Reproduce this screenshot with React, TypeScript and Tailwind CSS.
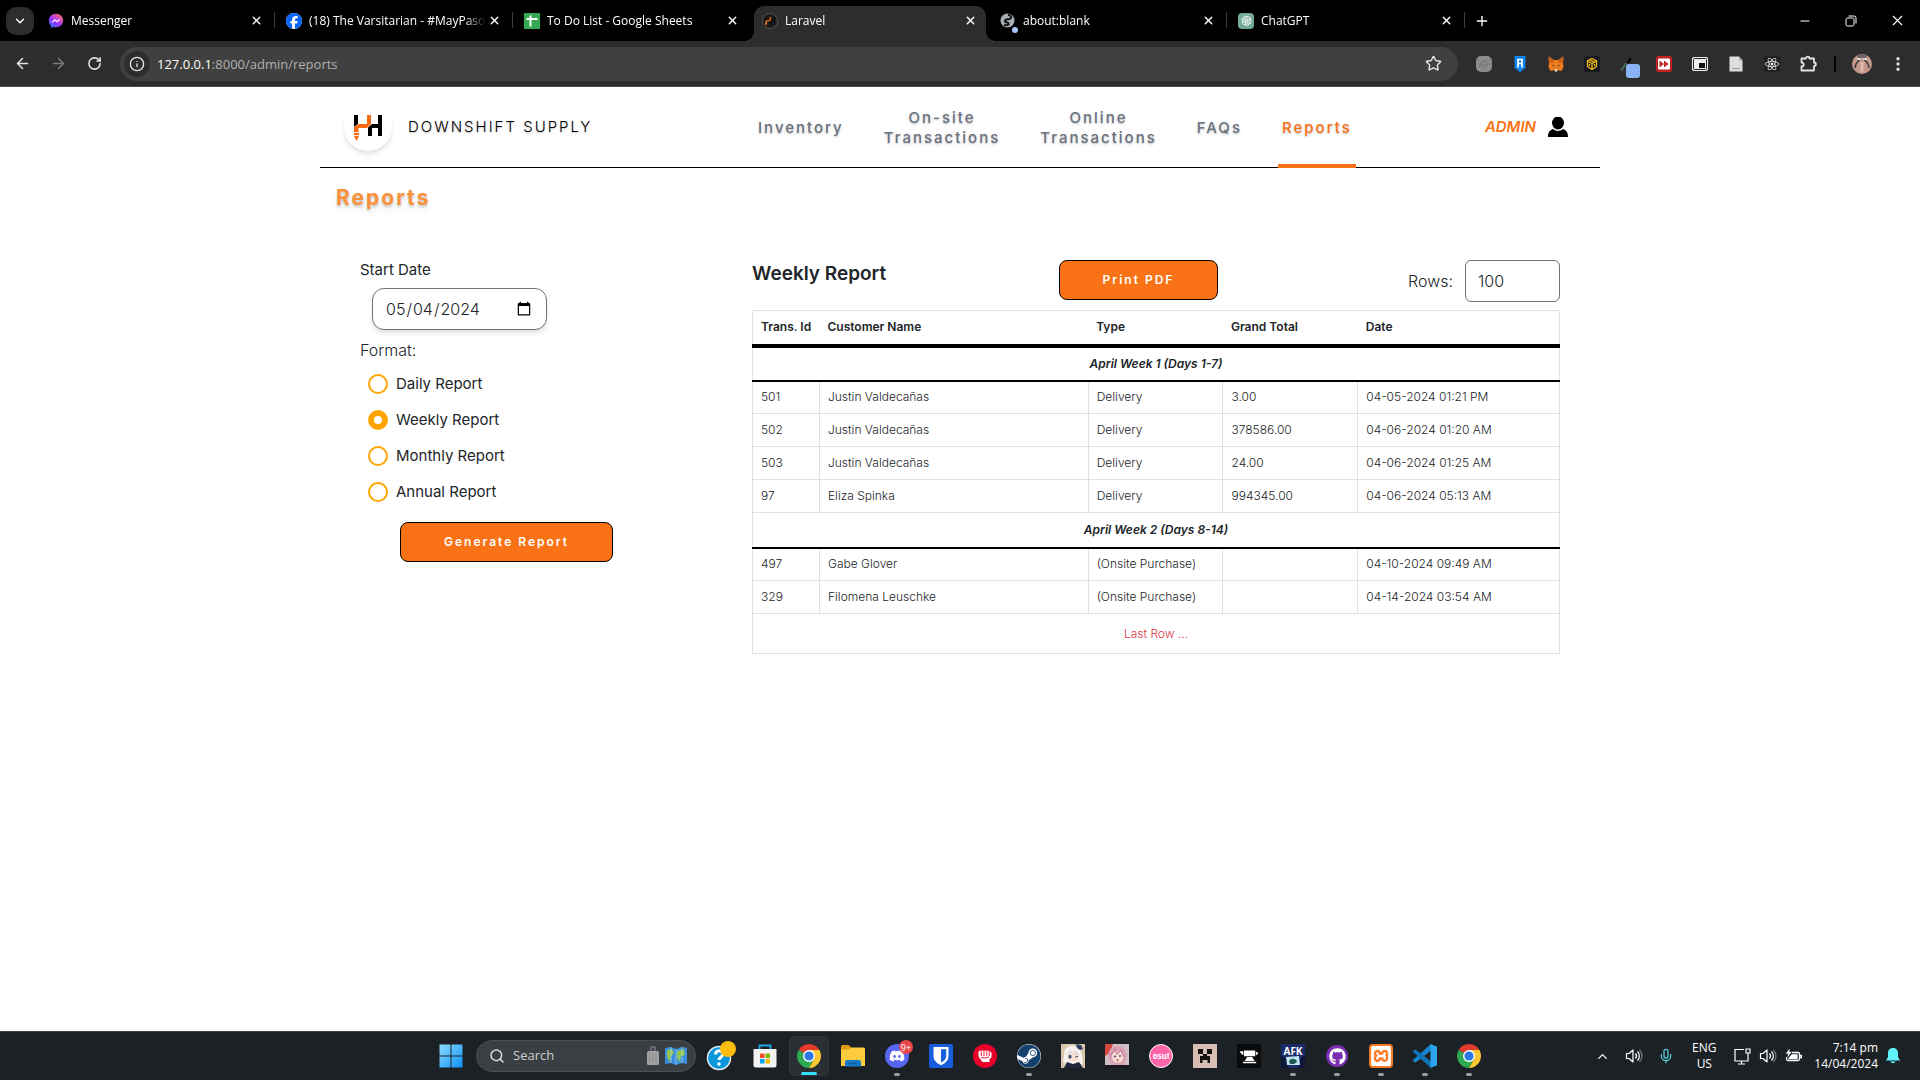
import React, { useState } from "react";
import {
  ArrowLeft,
  ArrowRight,
  RotateCw,
  Info,
  Star,
  X,
  Plus,
  ChevronDown,
  ChevronUp,
  Minus,
  EllipsisVertical,
  Search,
  Mic,
} from "lucide-react";
import { FaDiscord, FaFacebook, FaGithub, FaReact, FaSteam } from "react-icons/fa6";
import { AiOutlineOpenAI } from "react-icons/ai";
import { GiAnvil } from "react-icons/gi";
import { SiXampp } from "react-icons/si";

/* ---------- browser chrome icons ---------- */

const MessengerIcon = () => (
  <svg viewBox="0 0 16 16" className="size-4">
    <defs>
      <linearGradient id="msg" x1="0" y1="1" x2="0.8" y2="0">
        <stop offset="0" stopColor="#0a7cff" />
        <stop offset="0.5" stopColor="#a033ff" />
        <stop offset="1" stopColor="#ff6968" />
      </linearGradient>
    </defs>
    <path d="M8 .8C3.8.8.8 3.8.8 7.7c0 2.1.9 3.8 2.2 5v2.4l2.2-1.2c.9.3 1.8.4 2.8.4 4.200 0 7.200-3 7.200-6.700S12.200.8 8 .8z" fill="url(#msg)" />
    <path d="M3.700 9.600 6.700 6.300 9 8.200 12.300 5.800 9.300 9.200 7 7.400z" fill="#fff" stroke="#fff" strokeWidth=".5" />
  </svg>
);

const SheetsIcon = () => (
  <svg viewBox="0 0 16 16" className="size-4">
    <rect width="16" height="16" rx="1" fill="#34a853" />
    <path d="M6.500 2.500v11M2.500 6h11" stroke="#fff" strokeWidth="2" />
  </svg>
);

const BrandMark = ({ dark }: { dark?: boolean }) => (
  <svg viewBox="0 0 30 30" className="size-full" aria-hidden="true">
    <g fill={dark ? "#111" : "#000"}>
      <path d="M1 3h4v9l-4 3z" />
      <path d="M25 3h4v21h-4v-8h-6v8h-4v-8.500l4-3.500h6z" />
    </g>
    <path d="M14 3h4v9l-4 4H5.500v5H1v-5.500L5.500 12H14z" fill="#f96a10" />
    <path d="M1 21h5v3l-2.500 5L1 24z" fill="#f96a10" />
    <path d="M1 20.500h5M1 23.500h5" stroke="#fff" strokeWidth=".8" />
  </svg>
);

const LaravelTabIcon = () => (
  <span className="flex size-4 items-center justify-center rounded-full border border-[#555] bg-[#1a1a1a] p-0.5">
    <BrandMark dark />
  </span>
);

const GlobeTabIcon = () => (
  <span className="relative block size-4">
    <svg viewBox="0 0 16 16" className="size-4">
      <circle cx="7.500" cy="7.500" r="7" fill="#a8adb3" />
      <path d="M8 2c3 0 4 2 2.500 3.500C8.500 7 6 5.500 5 7.500S8 9 8.500 10.500 6 13 4 11.500" fill="none" stroke="#111" strokeWidth="2" />
    </svg>
    <span className="absolute -right-0.5 -bottom-1 size-1.5 rounded-full bg-[#a8c7fa]" />
  </span>
);

const GptTabIcon = () => (
  <span className="flex size-4 items-center justify-center rounded-sm bg-[#74aa9c] text-white">
    <AiOutlineOpenAI size={13} />
  </span>
);

type Tab = { title: string; icon: React.ReactNode; active?: boolean; divider?: boolean };

const tabs: Tab[] = [
  { title: "Messenger", icon: <MessengerIcon />, divider: true },
  { title: "(18) The Varsitarian - #MayPaso", icon: <span className="flex size-4 rounded-full bg-white text-[#0866ff]"><FaFacebook size={16} /></span>, divider: true },
  { title: "To Do List - Google Sheets", icon: <SheetsIcon /> },
  { title: "Laravel", icon: <LaravelTabIcon />, active: true },
  { title: "about:blank", icon: <GlobeTabIcon />, divider: true },
  { title: "ChatGPT", icon: <GptTabIcon />, divider: true },
];

function TabStrip() {
  return (
    <div className="flex h-[41px] items-stretch bg-black text-white">
      <div className="flex w-[37px] items-center pl-1.5">
        <button aria-label="Search tabs" className="flex h-7 w-7 items-center justify-center rounded-[10px] bg-[#2d2d2d]">
          <ChevronDown size={14} strokeWidth={2.500} />
        </button>
      </div>
      {tabs.map((tab) => (
        <div key={tab.title} className="relative flex w-[238px] shrink items-end px-[3px]">
          <div
            className={
              tab.active
                ? "relative flex h-[35px] w-full items-center rounded-t-[10px] bg-[#2d2d2d] pr-2 pb-1.5 pl-2"
                : "flex h-[35px] w-full items-center pr-2 pb-1.5 pl-2"
            }
          >
            {tab.active && (
              <>
                <span className="absolute bottom-0 -left-2.5 size-2.5 bg-[radial-gradient(circle_at_0_0,#000_10px,#2d2d2d_10px)]" />
                <span className="absolute -right-2.5 bottom-0 size-2.5 bg-[radial-gradient(circle_at_100%_0,#000_10px,#2d2d2d_10px)]" />
              </>
            )}
            {tab.icon}
            <span className="ml-[7px] flex-1 overflow-hidden text-xs whitespace-nowrap [mask-image:linear-gradient(to_right,#000_88%,transparent)]">
              {tab.title}
            </span>
            <button aria-label={`Close ${tab.title}`} className="flex size-4 items-center justify-center">
              <X size={13} strokeWidth={2.500} />
            </button>
          </div>
          {tab.divider && <span className="absolute top-3 right-0 h-4 w-px bg-[#3c3c3c]" />}
        </div>
      ))}
      <button aria-label="New tab" className="flex w-[34px] items-center justify-center">
        <Plus size={16} />
      </button>
      <div className="ml-auto flex items-center">
        <button aria-label="Minimize" className="flex h-full w-[46px] items-center justify-center">
          <Minus size={14} strokeWidth={1.800} />
        </button>
        <button aria-label="Restore" className="flex h-full w-[46px] items-center justify-center">
          <svg viewBox="0 0 12 12" className="size-3" fill="none" stroke="currentColor">
            <rect x="1" y="3" width="8" height="8" rx="1.500" />
            <path d="M3.500 1h5.500a2 2 0 0 1 2 2v5.500" />
          </svg>
        </button>
        <button aria-label="Close window" className="flex h-full w-[46px] items-center justify-center">
          <X size={17} strokeWidth={1.600} />
        </button>
      </div>
    </div>
  );
}

const extensions: { label: string; icon: React.ReactNode }[] = [
  {
    label: "Paused extension",
    icon: (
      <svg viewBox="0 0 16 16" className="size-4">
        <rect width="16" height="16" rx="5" fill="#8b8b8b" />
        <path d="M3.500 11c0-4 5-6.500 8-6.500M5 12c4 0 7-3 7-6M4 9h7" stroke="#767676" strokeWidth="1.200" fill="none" />
      </svg>
    ),
  },
  {
    label: "Shield extension",
    icon: (
      <svg viewBox="0 0 16 16" className="size-4">
        <path d="M2.500 0h11v12L8 16l-5.500-4z" fill="#0b84ee" />
        <path d="M6 11.500V3.500h4v4H6m4 0v4" stroke="#fff" strokeWidth="1.700" fill="none" />
      </svg>
    ),
  },
  {
    label: "Wallet extension",
    icon: (
      <svg viewBox="0 0 16 16" className="size-4">
        <path d="M.5.5 6 4h4L15.500.5 15 7l.5 4-2 4-3.500-1-1 1.500H7L6 14l-3.500 1-2-4L1 7z" fill="#ee7c1e" />
        <path d="M.5.5 6 4 5 7 1 7zM15.500.5 10 4l1 3 4 0z" fill="#c9611a" />
        <path d="M4.500 8.500 6.500 10 5 10.500zM11.500 8.500 9.500 10l1.500.5z" fill="#233447" />
        <path d="M6.500 13h3l-.5 2.500H7z" fill="#d8cfc6" />
      </svg>
    ),
  },
  {
    label: "Chain extension",
    icon: (
      <svg viewBox="0 0 16 16" className="size-4">
        <rect width="16" height="16" rx="3" fill="#181a20" />
        <path d="M8 2.500 12.500 5v5.500L8 13.500 3.500 10.500V5zM3.500 5 8 7.500 12.500 5M8 7.500v6M5.700 3.700 10.300 6.300M5.500 8v2M10.500 8v2" stroke="#f0b90b" strokeWidth="1.300" fill="none" />
      </svg>
    ),
  },
  {
    label: "Colour picker",
    icon: (
      <span className="relative block size-4">
        <svg viewBox="0 0 16 16" className="size-4">
          <path d="M1 15 7 6" stroke="#3f6b50" strokeWidth="2" />
          <path d="M6 6.500 10 1.500l2 1.500-4 5z" fill="#0a0a0a" />
        </svg>
        <span className="absolute -right-1 -bottom-1.5 h-3.5 w-3.5 rounded-[3px] bg-[#8ab4f8]" />
      </span>
    ),
  },
  {
    label: "Video speed",
    icon: (
      <svg viewBox="0 0 16 16" className="size-4">
        <rect width="16" height="16" rx="3" fill="#c5221f" />
        <rect x="2" y="2.500" width="12" height="11" rx="1" fill="#fff" />
        <path d="M3.500 4.500 8 8l-4.500 3.500zM8 4.500 12.500 8 8 11.500z" fill="#c5221f" />
      </svg>
    ),
  },
  {
    label: "Picture in picture",
    icon: (
      <svg viewBox="0 0 16 16" className="size-4">
        <rect y="1" width="16" height="14" rx="2" fill="#eee" />
        <rect x="1.500" y="2.500" width="13" height="11" rx="1" fill="none" stroke="#222" />
        <rect x="7" y="7" width="6" height="5" fill="#111" />
      </svg>
    ),
  },
  {
    label: "Document extension",
    icon: (
      <svg viewBox="0 0 16 16" className="size-4">
        <path d="M1.500.5H11l3.500 4v11h-13z" fill="#dedede" />
        <path d="M11 .5v4h3.500z" fill="#a5a5a5" />
        <path d="M4 12.500h8" stroke="#aaa" strokeWidth="1.500" />
      </svg>
    ),
  },
  { label: "React tools", icon: <span className="flex size-4 items-center justify-center bg-[#222] text-white"><FaReact size={14} /></span> },
  {
    label: "Extensions",
    icon: (
      <svg viewBox="0 0 17 17" className="size-[17px]" fill="none" stroke="#e3e3e3" strokeWidth="1.800" strokeLinejoin="round">
        <path d="M1.500 3.500H6c0-2.500 3.500-2.500 3.500 0h4.500v4c2.500 0 2.500 3.500 0 3.500v4.500H1.500v-4c3 0 3-4 0-4z" />
      </svg>
    ),
  },
];

function Toolbar() {
  return (
    <div className="flex h-[46px] items-center border-b border-[#4a4a4a] bg-[#2d2d2d] pr-1 text-[#e3e3e3]">
      <div className="flex w-[120px] items-center">
        <button aria-label="Back" className="flex w-11 justify-center"><ArrowLeft size={17} strokeWidth={2.200} /></button>
        <button aria-label="Forward" className="flex w-7 justify-center text-[#7a7a7a]"><ArrowRight size={17} strokeWidth={2.200} /></button>
        <button aria-label="Reload" className="flex w-11 justify-center"><RotateCw size={15} strokeWidth={2.500} /></button>
      </div>
      <div className="flex h-[34px] flex-1 items-center rounded-full bg-[#404040] pr-4 pl-1">
        <button aria-label="Site information" className="flex size-[26px] items-center justify-center rounded-full bg-[#2d2d2d]">
          <Info size={16} />
        </button>
        <span className="ml-[7px] text-[13px] leading-5 text-[#b0b0b0]">
          <span className="text-white">127.0.0.1</span>:8000/admin/reports
        </span>
        <button aria-label="Bookmark this tab" className="ml-auto"><Star size={17} /></button>
      </div>
      <div className="ml-2 flex items-center">
        {extensions.map((ext) => (
          <button key={ext.label} aria-label={ext.label} className="flex w-9 justify-center">{ext.icon}</button>
        ))}
        <span className="mx-2 h-4 w-0.5 bg-black" />
        <button aria-label="Profile" className="flex w-9 justify-center">
          <svg viewBox="0 0 20 20" className="size-5">
            <clipPath id="av"><circle cx="10" cy="10" r="10" /></clipPath>
            <g clipPath="url(#av)">
              <rect width="20" height="20" fill="#c4988b" />
              <path d="M4 0h12l-2 4H6z" fill="#6f6461" />
              <path d="M3 14C3 8 7 8 7.500 5M17 14c0-6-4-6-4.500-9" stroke="#4c4444" strokeWidth="1.800" fill="none" />
              <path d="M5 5h4M11 5h4" stroke="#d5d5d8" strokeWidth="2" />
              <path d="M10 8v10" stroke="#e0b9ab" strokeWidth="3" />
              <path d="M0 14l4 6H0zM20 14l-4 6h4z" fill="#a46a60" />
            </g>
          </svg>
        </button>
        <button aria-label="Menu" className="flex w-9 justify-center"><EllipsisVertical size={18} strokeWidth={2.500} /></button>
      </div>
    </div>
  );
}

/* ---------- page ---------- */

const navItems = ["Inventory", "On-site Transactions", "Online Transactions", "FAQs"];

function SiteHeader() {
  return (
    <header className="flex h-[81px] items-stretch border-b border-black pr-8 pl-6">
      <a href="#home" className="flex w-[410px] items-center gap-4">
        <span className="flex size-12 items-center justify-center rounded-full bg-white p-[9px] shadow-md"><BrandMark /></span>
        <span className="text-[15px] leading-5 font-light tracking-[2px] text-black text-shadow-md">DOWNSHIFT SUPPLY</span>
      </a>
      <nav className="flex items-stretch gap-8 text-center text-[15px] leading-5 font-medium tracking-[2px] text-[#6b7280] text-shadow-md">
        {navItems.map((item) => (
          <a key={item} href={`#${item}`} className="flex items-center px-1 pt-0.5 whitespace-pre-line">
            {item.replace(" ", "\n")}
          </a>
        ))}
        <a href="#reports" aria-current="page" className="-mb-px flex items-center border-b-4 border-[#f97316] px-1 pt-1 text-[#f97316]">
          Reports
        </a>
      </nav>
      <a href="#admin" className="ml-auto flex items-center gap-3">
        <span className="text-[15px] leading-5 font-semibold text-[#f97316] italic">ADMIN</span>
        <svg viewBox="0 0 20 20" className="size-5" aria-hidden="true">
          <ellipse cx="10" cy="6" rx="6" ry="6.500" />
          <path d="M0 20c0-5 2-7 5-8 3 2.500 7 2.500 10 0 3 1 5 3 5 8z" />
        </svg>
      </a>
    </header>
  );
}

const formats = ["Daily Report", "Weekly Report", "Monthly Report", "Annual Report"];
const buttonClass =
  "h-10 rounded-lg border border-black bg-[#f97316] text-xs font-semibold tracking-[2px] text-white";

function ReportForm() {
  const [format, setFormat] = useState("Weekly Report");
  return (
    <form className="text-[#212529]" onSubmit={(e) => e.preventDefault()}>
      <label htmlFor="start" className="block text-[15px] leading-5">Start Date</label>
      <input
        id="start"
        type="date"
        defaultValue="2024-05-04"
        className="mt-2 ml-3 block h-[42px] w-[175px] rounded-xl border border-[#6b7280] bg-white px-3 text-base font-light shadow-md"
      />
      <fieldset>
        <legend className="pt-2 text-base leading-6 font-light">Format:</legend>
        <div className="mt-1 flex flex-col pl-2">
          {formats.map((f) => (
            <label key={f} className="flex h-9 items-center gap-2 text-[15px] leading-5">
              <input
                type="radio"
                name="format"
                checked={format === f}
                onChange={() => setFormat(f)}
                className="size-5 appearance-none rounded-full border-2 border-[orange] bg-white checked:border-[6px]"
              />
              {f}
            </label>
          ))}
        </div>
      </fieldset>
      <button type="submit" className={`mt-3 ml-10 w-[213px] ${buttonClass}`}>Generate Report</button>
    </form>
  );
}

type Row = [string, string, string, string, string];
const weeks: { title: string; rows: Row[] }[] = [
  {
    title: "April Week 1 (Days 1-7)",
    rows: [
      ["501", "Justin Valdecañas", "Delivery", "3.00", "04-05-2024 01:21 PM"],
      ["502", "Justin Valdecañas", "Delivery", "378586.00", "04-06-2024 01:20 AM"],
      ["503", "Justin Valdecañas", "Delivery", "24.00", "04-06-2024 01:25 AM"],
      ["97", "Eliza Spinka", "Delivery", "994345.00", "04-06-2024 05:13 AM"],
    ],
  },
  {
    title: "April Week 2 (Days 8-14)",
    rows: [
      ["497", "Gabe Glover", "(Onsite Purchase)", "", "04-10-2024 09:49 AM"],
      ["329", "Filomena Leuschke", "(Onsite Purchase)", "", "04-14-2024 03:54 AM"],
    ],
  },
];

function ReportTable() {
  return (
    <section className="text-[#212529]">
      <div className="flex items-start justify-between">
        <h2 className="w-[307px] text-[19px] leading-7 font-semibold">Weekly Report</h2>
        <button className={`w-[159px] ${buttonClass}`}>Print PDF</button>
        <div className="flex w-[342px] items-center justify-end gap-3">
          <label htmlFor="rows" className="text-base font-light">Rows:</label>
          <input
            id="rows"
            type="text"
            inputMode="numeric"
            defaultValue="100"
            className="h-[42px] w-[95px] rounded-md border border-[#6b7280] px-3 text-base font-light"
          />
        </div>
      </div>
      <table className="mt-2 w-full table-fixed border-collapse border border-[#dee2e6] text-xs leading-4">
        <colgroup>
          <col className="w-[8.3%]" />
          <col className="w-[33.3%]" />
          <col className="w-[16.7%]" />
          <col className="w-[16.7%]" />
          <col />
        </colgroup>
        <thead>
          <tr className="h-[35px] border-b-4 border-black text-left">
            {["Trans. Id", "Customer Name", "Type", "Grand Total", "Date"].map((h) => (
              <th key={h} className="px-2 font-semibold whitespace-nowrap">{h}</th>
            ))}
          </tr>
        </thead>
        {weeks.map((w) => (
          <tbody key={w.title}>
            <tr className="h-[35px] border-b-2 border-black">
              <th colSpan={5} className="text-center font-semibold italic">{w.title}</th>
            </tr>
            {w.rows.map((r) => (
              <tr key={r[0]} className="h-[33px]">
                {r.map((c, i) => (
                  <td key={i} className="border border-[#dee2e6] px-2 font-light">{c}</td>
                ))}
              </tr>
            ))}
          </tbody>
        ))}
        <tfoot>
          <tr className="h-10">
            <td colSpan={5} className="border border-[#dee2e6] text-center font-light text-[#dc3545]">Last Row ...</td>
          </tr>
        </tfoot>
      </table>
    </section>
  );
}

/* ---------- taskbar ---------- */

const ChromeIcon = () => (
  <svg viewBox="0 0 24 24" className="size-6">
    <path d="M12 12 1.610 6A12 12 0 0 1 22.390 6z" fill="#e33b2e" />
    <path d="M12 12 1.610 6A12 12 0 0 0 12 24l5.200-9z" fill="#2da94f" />
    <path d="M12 12V6h10.390A12 12 0 0 1 12 24l5.200-9z" fill="#fcc934" />
    <path d="M12 6h10.390L17.200 9z" fill="#fcc934" />
    <circle cx="12" cy="12" r="6" fill="#fff" />
    <circle cx="12" cy="12" r="4.600" fill="#2b78e4" />
  </svg>
);

type App = { name: string; icon: React.ReactNode; running?: boolean; active?: boolean };

const apps: App[] = [
  {
    name: "Get Help",
    icon: (
      <svg viewBox="0 0 30 30" className="size-[30px]">
        <circle cx="13" cy="17" r="11.500" fill="#0b96dc" stroke="#dfeaf1" strokeWidth="1.500" />
        <path d="M9.500 13.500c0-5 7.500-5 7.500-.5 0 3-4 3-4 6" stroke="#fff" strokeWidth="3" fill="none" />
        <circle cx="13" cy="23" r="1.800" fill="#fff" />
        <circle cx="22" cy="8" r="8" fill="#fdbb10" />
      </svg>
    ),
  },
  {
    name: "Microsoft Store",
    icon: (
      <svg viewBox="0 0 24 24" className="size-6">
        <path d="M6.500 7V1.500h11V7" fill="none" stroke="#1da8e8" strokeWidth="1.800" />
        <path d="M.5 5h23v16a2.500 2.500 0 0 1-2.500 2.500H3A2.500 2.500 0 0 1 .5 21z" fill="#f3f3f3" />
        <path d="M7 9.500h4.500V14H7z" fill="#f25022" /><path d="M12.500 9.500H17V14h-4.500z" fill="#7fba00" />
        <path d="M7 15h4.500v4.500H7z" fill="#00a4ef" /><path d="M12.500 15H17v4.500h-4.500z" fill="#ffb900" />
      </svg>
    ),
  },
  { name: "Chrome", icon: <ChromeIcon />, active: true },
  {
    name: "File Explorer",
    icon: (
      <svg viewBox="0 0 24 24" className="size-6">
        <path d="M0 2.500A1.500 1.500 0 0 1 1.500 1h6L10 3.500V6H0z" fill="#e09b12" />
        <path d="M0 5.500h8l2-2h12.500A1.500 1.500 0 0 1 24 5v17H0z" fill="#fdcb40" />
        <path d="M4 22.500V18a2 2 0 0 1 2-2h12a2 2 0 0 1 2 2v4.500z" fill="#1779c9" />
        <path d="M8 19.500h8" stroke="#0d5796" strokeWidth="1.500" />
      </svg>
    ),
  },
  {
    name: "Discord",
    running: true,
    icon: (
      <span className="relative flex size-6 items-center justify-center rounded-full bg-[#5865f2] text-white">
        <FaDiscord size={16} />
        <span className="absolute -top-1 -right-1 flex size-3.5 items-center justify-center rounded-full bg-[#e8484c] text-[9px] leading-none">9+</span>
      </span>
    ),
  },
  {
    name: "Bitwarden",
    icon: (
      <svg viewBox="0 0 24 24" className="size-6">
        <rect width="24" height="24" rx="2" fill="#175ddc" />
        <path d="M4.500 3h15v9c0 5-4 7.500-7.500 9.300C8.500 19.500 4.500 17 4.500 12z" fill="#fff" />
        <path d="M12 5.200h5.200V12c0 3.200-2.500 5-5.200 6.600z" fill="#175ddc" />
      </svg>
    ),
  },
  {
    name: "Fist",
    icon: (
      <svg viewBox="0 0 24 24" className="size-6">
        <circle cx="12" cy="12" r="12" fill="#eb0029" />
        <path d="M5.500 7.500 8 6.500l3 .2 3-.2 2 .5 2.500 1.500v5l-2 1.500v3H9.500l-3-4-1-2z" fill="#fff" />
        <path d="M8.300 7.500v4.500M11 7v5M13.800 7v5M16.300 7.500V12M8 13.500l4 .5 4-1" stroke="#eb0029" strokeWidth=".9" fill="none" />
      </svg>
    ),
  },
  { name: "Steam", running: true, icon: <span className="flex size-6 items-center justify-center rounded-full bg-white text-[#14406e]"><FaSteam size={24} /></span> },
  {
    name: "Game one",
    icon: (
      <svg viewBox="0 0 24 24" className="size-6">
        <rect width="24" height="24" fill="#d9c6ad" />
        <path d="M3 11C3 4 8 1 13 2s8 5 8 10l1 7-5 3H6L2 17z" fill="#f5f2f0" />
        <path d="M6 12c1-4 3-4 6-4s6 1 6 5-3 4.500-6 4.500S6 15.500 6 12z" fill="#f9dfcf" />
        <path d="M5 11l5-6 1 5 4-4 4 6-3-1-5-1z" fill="#e4dcdc" />
        <path d="M15 0l5 1 2 4-3 1-3-2z" fill="#2d3f68" />
        <path d="M3 24l3-6 6 2 6-2 4 6z" fill="#23263d" />
        <path d="M8 11.500h2V14H8zM14 13l3-.5" stroke="#474f7b" fill="#474f7b" />
      </svg>
    ),
  },
  {
    name: "Game two",
    icon: (
      <svg viewBox="0 0 24 24" className="size-6">
        <rect width="24" height="24" fill="#cfc0c5" />
        <path d="M0 0h8L5 9 0 12z" fill="#d7483e" />
        <path d="M3 13C3 5 8 2 13 2s9 4 9 11l-3 8H6z" fill="#dba3b6" />
        <path d="M7 12c1-4 3-5 6-5s5 2 5 6-2 5.500-5.500 5.500S7 16 7 12z" fill="#f8ddd5" />
        <path d="M5 12l5-7 2 5 4-4 3 7" stroke="#c989a3" strokeWidth="1.500" fill="none" />
        <path d="M9 13l2-1M14 12h2" stroke="#6e4a86" strokeWidth="1.500" />
        <path d="M11 15.500h3l-1.500 2z" fill="#b8434d" />
        <path d="M0 21h24v3H0z" fill="#1a1718" />
      </svg>
    ),
  },
  { name: "osu!", icon: <span className="flex size-6 items-center justify-center rounded-full border border-white bg-[#ff66aa] text-[8px] font-bold text-white">osu!</span> },
  {
    name: "Creeper",
    icon: (
      <svg viewBox="0 0 24 24" className="size-6">
        <rect width="24" height="24" fill="#d8bdb2" />
        <path d="M5 5h5v5H5zM14 5h5v5h-5zM10 10h4v2h3v7h-2.500v-3h-5v3H7v-7h3z" fill="#151111" />
      </svg>
    ),
  },
  { name: "Anvil", icon: <span className="flex size-6 items-center justify-center bg-[#0b0b0b] text-white"><GiAnvil size={20} /></span> },
  {
    name: "AFK",
    running: true,
    icon: (
      <span className="relative flex size-6 justify-center bg-[#1b2c6b] text-white">
        <svg viewBox="0 0 24 24" className="size-6">
          <path d="M0 24V12l6 3 2 9zM24 24V11l-5 4-2 9z" fill="#0e1738" />
          <path d="M5 13l13-1 1 9H6z" fill="#bfe3ee" />
          <path d="M8 17c2-3 7-3 8 1l-3 2H9z" fill="#1c5a50" />
        </svg>
        <span className="absolute top-0.5 text-[10px] leading-none font-bold">AFK</span>
      </span>
    ),
  },
  { name: "GitHub", running: true, icon: <span className="flex size-[22px] items-center justify-center rounded-full bg-[#7b2fb0] text-white"><FaGithub size={17} /></span> },
  { name: "XAMPP", running: true, icon: <span className="flex size-6 items-center justify-center rounded-sm bg-[#fb7a24] text-white"><SiXampp size={20} /></span> },
  {
    name: "VS Code",
    running: true,
    icon: (
      <svg viewBox="0 0 24 24" className="size-6">
        <path d="M18 0v6.500L4 17.500 1.500 18.500 0 17v-1z" fill="#1486cf" />
        <path d="M18 24v-6.500L4 6.500 1.500 5.500 0 7v1z" fill="#0f73b8" />
        <path d="M17.500 0 24 2.700v18.600L17.500 24z" fill="#2ba5ee" />
      </svg>
    ),
  },
  { name: "Chrome profile", icon: <ChromeIcon />, running: true },
];

const Speaker = () => (
  <svg viewBox="0 0 18 16" className="h-4 w-[18px]" fill="none" stroke="#fff" strokeWidth="1.200">
    <path d="M1.500 5.500h2.500L8 2v12L4 10.500H1.500z" strokeLinejoin="round" />
    <path d="M10.500 5.500c1.300 1.500 1.300 3.500 0 5M12.500 3.500c2.500 2.500 2.500 6.500 0 9" />
    <path d="M14.500 2c3.300 3.500 3.300 8.500 0 12" stroke="#777" />
  </svg>
);

function Taskbar() {
  return (
    <footer className="flex h-[49px] items-center border-t border-[#3e4246] bg-[#1c2126] text-white">
      <div className="flex-1 pl-5" />
      <div className="flex h-full items-center">
        <button aria-label="Start" className="flex w-11 justify-center">
          <svg viewBox="0 0 24 24" className="size-6">
            <defs>
              <linearGradient id="win" x1="0" y1="0" x2="1" y2="1">
                <stop offset="0" stopColor="#8fdcff" /><stop offset="1" stopColor="#0a90f5" />
              </linearGradient>
            </defs>
            <path d="M.5.5h11v11H.5zM12.500.5h11v11h-11zM.5 12.500h11v11H.5zM12.500 12.500h11v11h-11z" fill="url(#win)" />
          </svg>
        </button>
        <div className="mx-[3px] flex h-8 w-[220px] items-center rounded-full border border-[#4b5054] bg-[#3a3f43] pr-2 pl-3">
          <Search size={16} strokeWidth={2.200} className="text-[#dcdcdc]" />
          <input aria-label="Search" placeholder="Search" className="ml-2 w-0 flex-1 bg-transparent text-[13px] placeholder:text-[#cfcfcf]" />
          <svg viewBox="0 0 12 20" className="mr-1.5 h-5 w-3">
            <path d="M4 6V1h4v5" fill="none" stroke="#75717c" strokeWidth="1.500" />
            <rect y="5" width="12" height="14" rx="1.500" fill="#a3a3a3" /><path d="M3 7v10M6 7v10M9 7v10" stroke="#8b8b8b" />
          </svg>
          <svg viewBox="0 0 22 20" className="h-5 w-[22px]">
            <path d="M0 2l6-1 5 2 6-2 5 1v16l-5-1-6 2-5-2-6 1z" fill="#3a8fdc" />
            <path d="M2 4l5-1 2 4-3 3-1 6-3-5zM12 5l7-2 1 6-4 1-1 6-3-4z" fill="#93c553" />
            <path d="M6 1v16M11 3v16M17 1v16" stroke="#c7e0f2" strokeWidth=".6" />
          </svg>
        </div>
        {apps.map((app) => (
          <button key={app.name} aria-label={app.name} className="flex h-full w-11 items-center justify-center">
            <span className={app.active ? "relative flex size-10 items-center justify-center rounded-md border border-[#30353a] bg-[#2a2f34]" : "relative flex size-10 items-center justify-center"}>
              {app.icon}
              {app.active && <span className="absolute bottom-0 h-[3px] w-4 rounded-full bg-[#35e0ff]" />}
              {app.running && <span className="absolute bottom-0 h-[3px] w-1.5 rounded-full bg-[#9a9da0]" />}
            </span>
          </button>
        ))}
      </div>
      <div className="flex flex-1 items-center justify-end pr-5 text-xs leading-4">
        <button aria-label="Hidden icons" className="flex w-8 justify-center"><ChevronUp size={15} /></button>
        <button aria-label="Volume mixer" className="flex w-8 justify-center"><Speaker /></button>
        <button aria-label="Microphone" className="flex w-8 justify-center text-[#55c8d6]"><Mic size={16} /></button>
        <button className="w-11 text-center">ENG<br />US</button>
        <button aria-label="Network, volume and battery" className="ml-2 flex items-center gap-2">
          <svg viewBox="0 0 17 17" className="size-[17px]" fill="none" stroke="#fff" strokeWidth="1.200">
            <path d="M10 1.500H1v11.500h13V9M4 16h7M7.500 13v3M12 1h4v4h-4zM14 5v6" />
          </svg>
          <Speaker />
          <svg viewBox="0 0 17 14" className="h-3.5 w-[17px]" fill="none" stroke="#fff" strokeWidth="1.300">
            <path d="M7 3.500h6a1.500 1.500 0 0 1 1.500 1.500v5a1.500 1.500 0 0 1-1.500 1.500H3A1.500 1.500 0 0 1 1.500 10V8M15 6.500h1.500v2H15" />
            <path d="M7 6h5v3.500H4z" fill="#fff" /><path d="M4.500 0 1 4.500h2.500L2.500 8l4-5H4z" fill="#fff" strokeWidth=".3" />
          </svg>
        </button>
        <button className="ml-3 text-right">7:14 pm<br />14/04/2024</button>
        <button aria-label="Notifications" className="ml-2">
          <svg viewBox="0 0 14 16" className="h-4 w-3.5" fill="#5ff2fb">
            <path d="M7 0c3.300 0 5 2.300 5 5v4l2 3.500H0L2 9V5c0-2.700 1.700-5 5-5zM4.500 13.500h5c-.5 2.300-4.500 2.300-5 0z" />
          </svg>
        </button>
      </div>
    </footer>
  );
}

export default function App() {
  return (
    <div className="flex min-h-screen flex-col bg-white font-['Open_Sans',sans-serif]">
      <TabStrip />
      <Toolbar />
      <main className="mx-auto w-full max-w-7xl flex-1 font-['Inter',sans-serif]">
        <SiteHeader />
        <h1 className="px-4 pt-4 text-[21px] leading-7 font-bold tracking-[2px] text-[#fb923c] text-shadow-lg">Reports</h1>
        <div className="grid grid-cols-[392fr_808fr] px-10 pt-12">
          <ReportForm />
          <ReportTable />
        </div>
      </main>
      <Taskbar />
    </div>
  );
}
